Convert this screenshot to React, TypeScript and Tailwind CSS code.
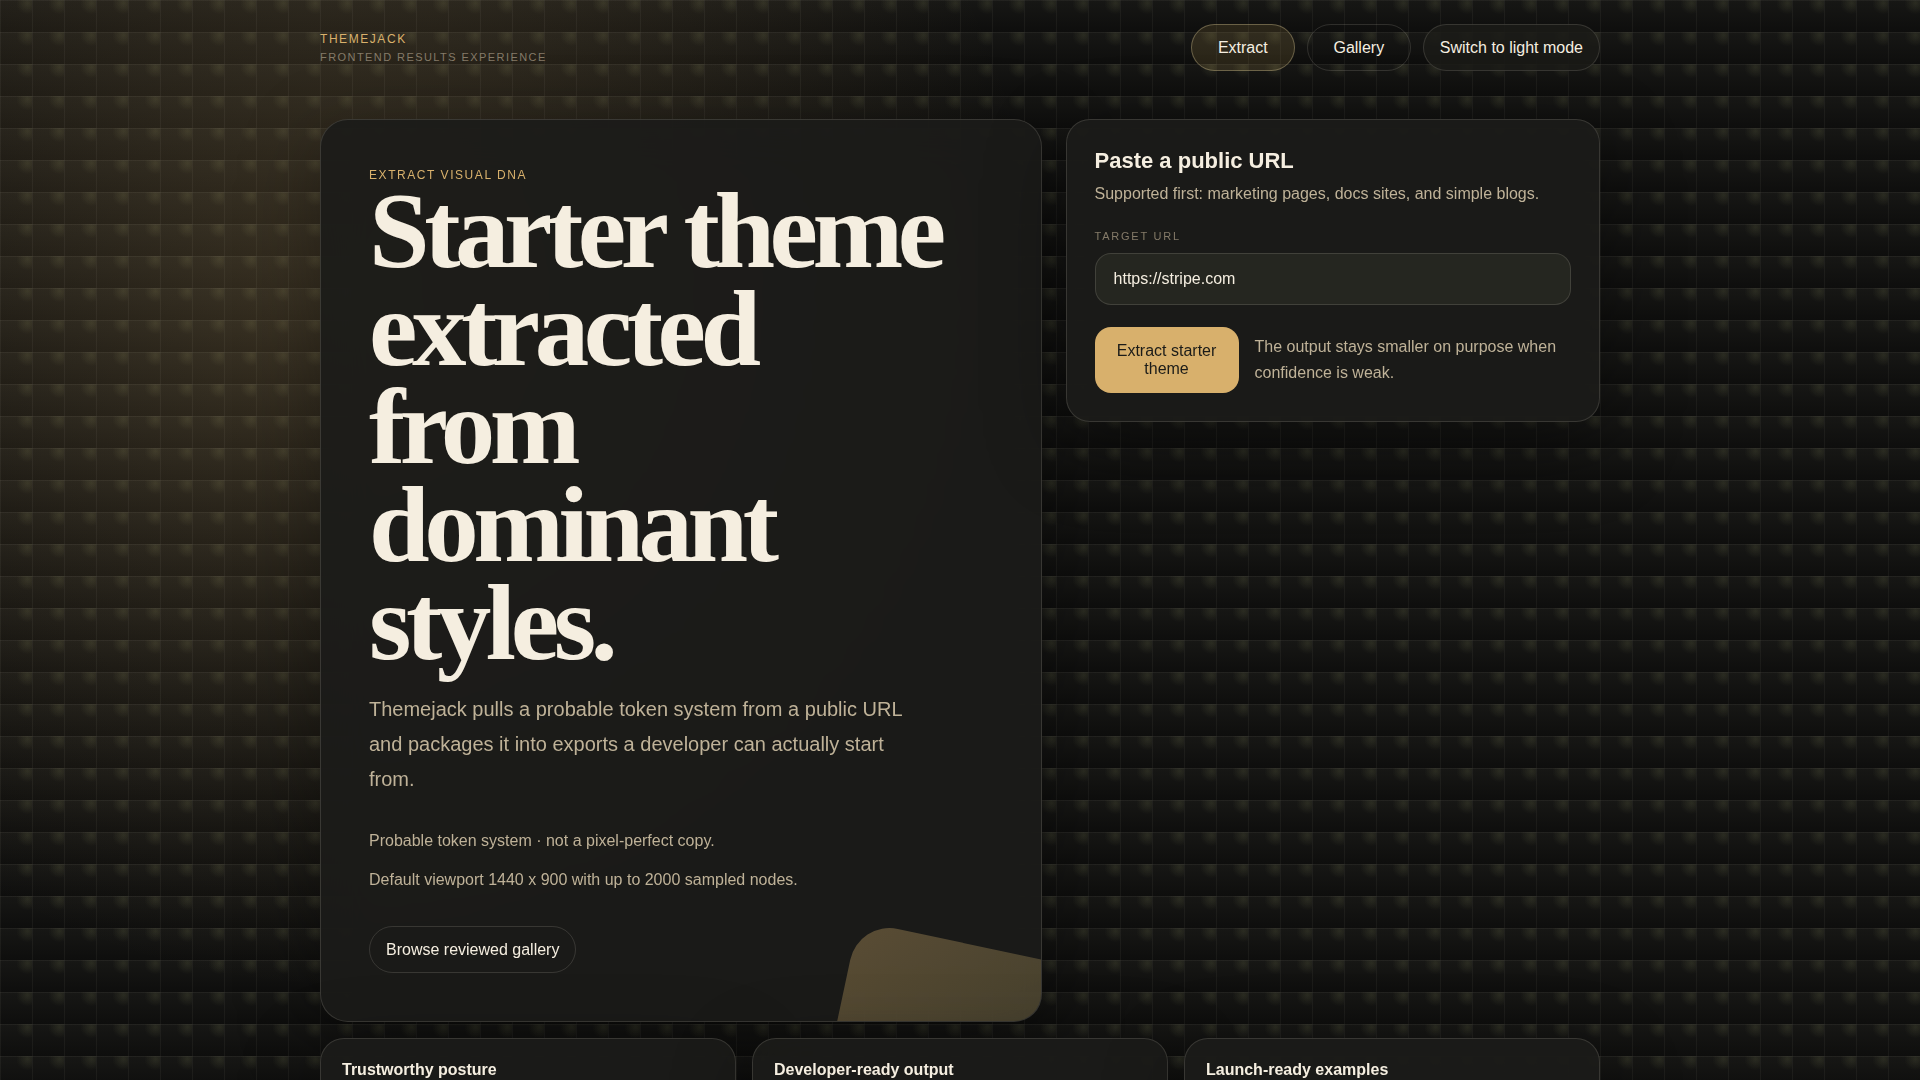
import React, { useState } from 'react';
import clsx from 'clsx';

const features = [
  {
    title: 'Trustworthy posture',
    body: 'Every export states how confident the extraction is.',
  },
  {
    title: 'Developer-ready output',
    body: 'Tokens ship as CSS variables, JSON and a Tailwind theme.',
  },
  {
    title: 'Launch-ready examples',
    body: 'Reviewed gallery entries show what a good result looks like.',
  },
];

const cardStyles =
  'border border-[#f4ecdc]/14 bg-[#1b1b19]/92 backdrop-blur-xl shadow-[0_24px_80px_rgba(0,0,0,0.35)]';

const pillStyles =
  'flex h-[47px] items-center justify-center rounded-full border px-4 text-[16px] text-[#f5eee0]';

function Header() {
  return (
    <header className="flex items-center justify-between pt-6">
      <div className="flex flex-col gap-1 uppercase">
        <span className="text-[12px] leading-[14px] tracking-[0.13em] text-[#d9b16c]">Themejack</span>
        <span className="text-[11px] leading-[14px] tracking-[0.13em] text-[#857b69]">
          Frontend results experience
        </span>
      </div>
      <nav className="flex gap-3">
        <a
          href="#extract"
          className={clsx(pillStyles, 'min-w-[104px] border-[#c8b98c]/40 bg-[#c9a55a]/15')}
        >
          Extract
        </a>
        <a href="#gallery" className={clsx(pillStyles, 'min-w-[104px] border-[#f4ecdc]/14')}>
          Gallery
        </a>
        <button type="button" className={clsx(pillStyles, 'border-[#f4ecdc]/14 bg-[#1b1b18]/85')}>
          Switch to light mode
        </button>
      </nav>
    </header>
  );
}

function Hero() {
  return (
    <section className={clsx(cardStyles, 'relative overflow-hidden rounded-[28px] p-12')}>
      <div className="absolute -right-[30px] -bottom-[18%] size-60 rotate-12 rounded-[40px] bg-linear-135 from-[#d9b16c] to-[#73724c] opacity-33" />
      <p className="text-[12px] leading-[14px] tracking-[0.13em] text-[#d9b16c] uppercase">
        Extract visual DNA
      </p>
      <h1 className="max-w-[600px] font-['Liberation_Serif',serif] text-[109px] leading-[98px] font-bold tracking-[-0.05em] text-[#f5eee0]">
        Starter theme extracted from dominant styles.
      </h1>
      <p className="mt-5 max-w-[560px] text-[20px] leading-[35px] text-[#bfb298]">
        Themejack pulls a probable token system from a public URL and packages it into exports a
        developer can actually start from.
      </p>
      <div className="mt-[30px] flex flex-col gap-3 leading-[27px] text-[#bfb298]">
        <p>Probable token system · not a pixel-perfect copy.</p>
        <p>Default viewport 1440 x 900 with up to 2000 sampled nodes.</p>
      </div>
      <div className="mt-[33px] flex">
        <a href="#gallery" className={clsx(pillStyles, 'border-[#f4ecdc]/14')}>
          Browse reviewed gallery
        </a>
      </div>
    </section>
  );
}

function UrlForm() {
  const [url, setUrl] = useState('https://stripe.com');

  return (
    <form
      className={clsx(cardStyles, 'rounded-3xl p-7')}
      onSubmit={(event) => event.preventDefault()}
    >
      <h2 className="text-[22px] leading-[26px] font-bold text-[#f5eee0]">Paste a public URL</h2>
      <p className="mt-[7px] leading-[26px] text-[#bfb298]">
        Supported first: marketing pages, docs sites, and simple blogs.
      </p>
      <label
        htmlFor="target-url"
        className="mt-[22px] block text-[11px] leading-[14px] tracking-[0.16em] text-[#857b69] uppercase"
      >
        Target URL
      </label>
      <input
        id="target-url"
        type="url"
        value={url}
        onChange={(event) => setUrl(event.target.value)}
        className="mt-2.5 h-[52px] w-full rounded-2xl border border-[#f4ecdc]/14 bg-[#252620] px-[18px] text-[16px] text-[#f5eee0] outline-none"
      />
      <div className="mt-[22px] flex items-center gap-4">
        <button
          type="submit"
          className="w-36 shrink-0 rounded-2xl bg-[#d8b06c] px-5 py-[15px] leading-[18px] text-[#1b1b18]"
        >
          Extract starter theme
        </button>
        <p className="leading-[26px] text-[#bfb298]">
          The output stays smaller on purpose when confidence is weak.
        </p>
      </div>
    </form>
  );
}

function Features() {
  return (
    <section className="mt-4 grid grid-cols-3 gap-4">
      {features.map((feature) => (
        <article key={feature.title} className={clsx(cardStyles, 'rounded-3xl px-[21px] py-5')}>
          <h3 className="text-[16px] leading-[22px] font-bold text-[#f5eee0]">{feature.title}</h3>
          <p className="mt-3 leading-[26px] text-[#bfb298]">{feature.body}</p>
        </article>
      ))}
    </section>
  );
}

// Grid lines, a wide gold glow, a small light in each tile and the tile shading
const backdropStyles = clsx(
  'bg-[linear-gradient(rgba(244,236,220,0.05)_1px,transparent_1px),linear-gradient(90deg,rgba(244,236,220,0.05)_1px,transparent_1px),radial-gradient(circle_at_18%_24%,rgba(217,177,108,0.2),transparent_38%),radial-gradient(circle_at_86%_10%,rgba(115,118,80,0.22),transparent_28%),linear-gradient(180deg,#171715,#0e0e0d)]',
  'bg-size-[32px_32px,32px_32px,auto,32px_32px,32px_32px]'
);

function App() {
  return (
    <div
      className={clsx(
        backdropStyles,
        "min-h-screen pb-16 font-['Liberation_Sans',Arial,sans-serif] text-[16px]"
      )}
    >
      <div className="mx-auto max-w-[1280px]">
        <Header />
        <main className="mt-12">
          <div className="grid grid-cols-[1.35fr_1fr] items-start gap-6">
            <Hero />
            <UrlForm />
          </div>
          <Features />
        </main>
      </div>
    </div>
  );
}

export default App;
